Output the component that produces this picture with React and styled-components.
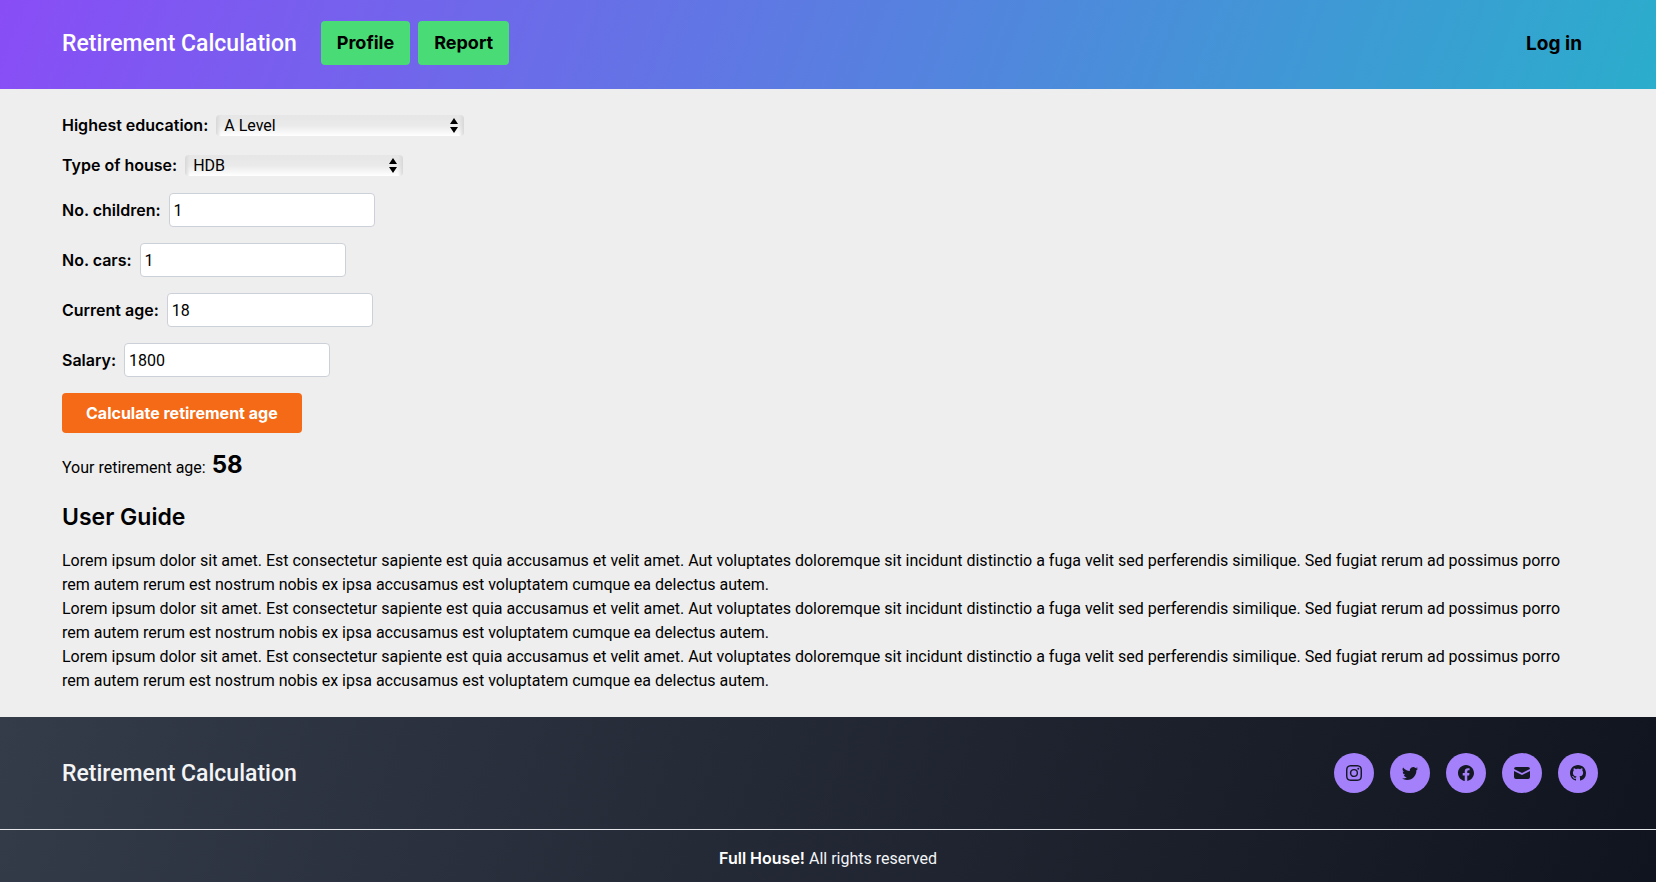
import React, { useState } from "react";
import styled, { createGlobalStyle } from "styled-components";
import { BsInstagram, BsTwitter, BsFacebook, BsGithub } from "react-icons/bs";
import { HiMail } from "react-icons/hi";

const display = `Inter, "Liberation Sans", sans-serif`;
const text = `Roboto, "Liberation Sans", sans-serif`;

const GlobalStyle = createGlobalStyle`
  *, *::before, *::after { box-sizing: border-box; }
  body {
    margin: 0;
    background: #eeeeee;
    color: #000000;
    font: 400 16px/24px ${text};
  }
  h1, h2, p { margin: 0; }
  button, input, select { font: inherit; color: inherit; }
`;

const Page = styled.div`
  display: flex;
  flex-direction: column;
  min-height: 100vh;
`;

const Header = styled.header`
  display: flex;
  align-items: center;
  justify-content: space-between;
  padding: 21px 58px 24px 62px;
  background: linear-gradient(110deg, #894df6, #2badcc);
`;

const HeaderStart = styled.div`
  display: flex;
  align-items: center;
  gap: 24px;
`;

const Brand = styled.a`
  padding-top: 2px;
  color: ${(p) => p.$color};
  font-size: 23px;
  font-weight: 500;
  line-height: 32px;
  text-decoration: none;
  white-space: nowrap;
`;

const Nav = styled.nav`
  display: flex;
  gap: 8px;
`;

const NavButton = styled.button`
  height: 44px;
  padding: 0 16px;
  border: 0;
  border-radius: 4px;
  background: #48db76;
  color: #000000;
  font: 700 18px/28px ${display};
  cursor: pointer;
`;

const LoginLink = styled.a`
  padding: 10px 16px 8px;
  color: #000000;
  font: 700 19px/24px ${display};
  text-decoration: none;
`;

const Main = styled.main`
  flex: 1;
  padding: 24px 70px 24px 62px;
`;

const Form = styled.form`
  display: flex;
  flex-direction: column;
  align-items: flex-start;
  gap: 16px;
`;

const Field = styled.div`
  display: flex;
  align-items: center;
  gap: 8px;
  min-height: 24px;
`;

const Label = styled.label`
  font-family: ${display};
  font-weight: 600;
`;

const TextInput = styled.input`
  width: 206px;
  height: 34px;
  padding: 4px;
  border: 1px solid #ccd0d8;
  border-radius: 4px;
  background: #ffffff;
`;

const SelectBox = styled.div`
  position: relative;
  display: flex;
  width: ${(p) => p.$width}px;

  svg {
    position: absolute;
    top: 3px;
    right: 6px;
    pointer-events: none;
  }
`;

const Select = styled.select`
  appearance: none;
  width: 100%;
  height: 21px;
  padding: 0 20px 0 8px;
  border: 0;
  border-radius: 4px;
  background:
    linear-gradient(90deg, #d8d8d8, #dedede00 5px),
    linear-gradient(270deg, #d8d8d8, #dedede00 5px),
    linear-gradient(#e6e6e6, #eaeaea 50%, #ffffff);
  line-height: 21px;
`;

const SubmitButton = styled.button`
  height: 40px;
  padding: 0 24px;
  border: 0;
  border-radius: 4px;
  background: #f56a16;
  color: #ffffff;
  font: 700 16px/24px ${display};
  cursor: pointer;
`;

const Result = styled.p`
  display: flex;
  align-items: baseline;
  gap: 6px;
  padding: 16px 0 20px;

  strong {
    font: 700 24px/32px ${display};
  }
`;

const GuideTitle = styled.h2`
  margin-bottom: 16px;
  font: 600 23px/32px ${display};
`;

const Footer = styled.footer`
  background: linear-gradient(110deg, #343b49, #10141e);
  color: #f3f4f6;
`;

const FooterTop = styled.div`
  display: flex;
  align-items: center;
  justify-content: space-between;
  padding: 36px 58px 36px 62px;
  border-bottom: 1px solid #e5e7eb;
`;

const Socials = styled.ul`
  display: flex;
  gap: 16px;
  margin: 0;
  padding: 0;
  list-style: none;
`;

const SocialLink = styled.a`
  display: flex;
  align-items: center;
  justify-content: center;
  width: 40px;
  height: 40px;
  border-radius: 50%;
  background: #a480fa;
  color: #141824;
`;

const Copyright = styled.p`
  padding: 16px 0 12px;
  text-align: center;

  strong {
    font-family: ${display};
    font-weight: 600;
    color: #ffffff;
  }
`;

const LOREM =
  "Lorem ipsum dolor sit amet. Est consectetur sapiente est quia accusamus et velit amet. Aut voluptates doloremque sit incidunt distinctio a fuga velit sed perferendis similique. Sed fugiat rerum ad possimus porro rem autem rerum est nostrum nobis ex ipsa accusamus est voluptatem cumque ea delectus autem.";

const SELECTS = [
  { id: "education", label: "Highest education:", width: 248, options: ["A Level", "O Level", "Diploma", "Degree"] },
  { id: "house", label: "Type of house:", width: 218, options: ["HDB", "Condominium", "Landed"] },
];

const INPUTS = [
  { id: "children", label: "No. children:", value: "1" },
  { id: "cars", label: "No. cars:", value: "1" },
  { id: "age", label: "Current age:", value: "18" },
  { id: "salary", label: "Salary:", value: "1800" },
];

const SOCIALS = [
  { name: "Instagram", Icon: BsInstagram, size: 16 },
  { name: "Twitter", Icon: BsTwitter, size: 16 },
  { name: "Facebook", Icon: BsFacebook, size: 16 },
  { name: "Email", Icon: HiMail, size: 20 },
  { name: "GitHub", Icon: BsGithub, size: 16 },
];

function Arrows() {
  return (
    <svg width="8" height="15" viewBox="0 0 8 15" aria-hidden="true">
      <path d="M4 0L8 6H0zM4 15L0 9H8z" />
    </svg>
  );
}

export default function App() {
  const [age] = useState(58);
  return (
    <Page>
      <GlobalStyle />
      <Header>
        <HeaderStart>
          <Brand href="#" $color="#ffffff">Retirement Calculation</Brand>
          <Nav>
            <NavButton type="button">Profile</NavButton>
            <NavButton type="button">Report</NavButton>
          </Nav>
        </HeaderStart>
        <LoginLink href="#login">Log in</LoginLink>
      </Header>
      <Main>
        <Form onSubmit={(e) => e.preventDefault()}>
          {SELECTS.map((f) => (
            <Field key={f.id}>
              <Label htmlFor={f.id}>{f.label}</Label>
              <SelectBox $width={f.width}>
                <Select id={f.id}>
                  {f.options.map((o) => <option key={o}>{o}</option>)}
                </Select>
                <Arrows />
              </SelectBox>
            </Field>
          ))}
          {INPUTS.map((f) => (
            <Field key={f.id}>
              <Label htmlFor={f.id}>{f.label}</Label>
              <TextInput id={f.id} inputMode="numeric" defaultValue={f.value} />
            </Field>
          ))}
          <SubmitButton type="submit">Calculate retirement age</SubmitButton>
        </Form>
        <Result>
          <span>Your retirement age:</span>
          <strong>{age}</strong>
        </Result>
        <GuideTitle>User Guide</GuideTitle>
        <p>{LOREM}</p>
        <p>{LOREM}</p>
        <p>{LOREM}</p>
      </Main>
      <Footer>
        <FooterTop>
          <Brand href="#" $color="#f3f4f6">Retirement Calculation</Brand>
          <Socials>
            {SOCIALS.map(({ name, Icon, size }) => (
              <li key={name}>
                <SocialLink href={`#${name.toLowerCase()}`} aria-label={name}><Icon size={size} /></SocialLink>
              </li>
            ))}
          </Socials>
        </FooterTop>
        <Copyright><strong>Full House!</strong> All rights reserved</Copyright>
      </Footer>
    </Page>
  );
}
